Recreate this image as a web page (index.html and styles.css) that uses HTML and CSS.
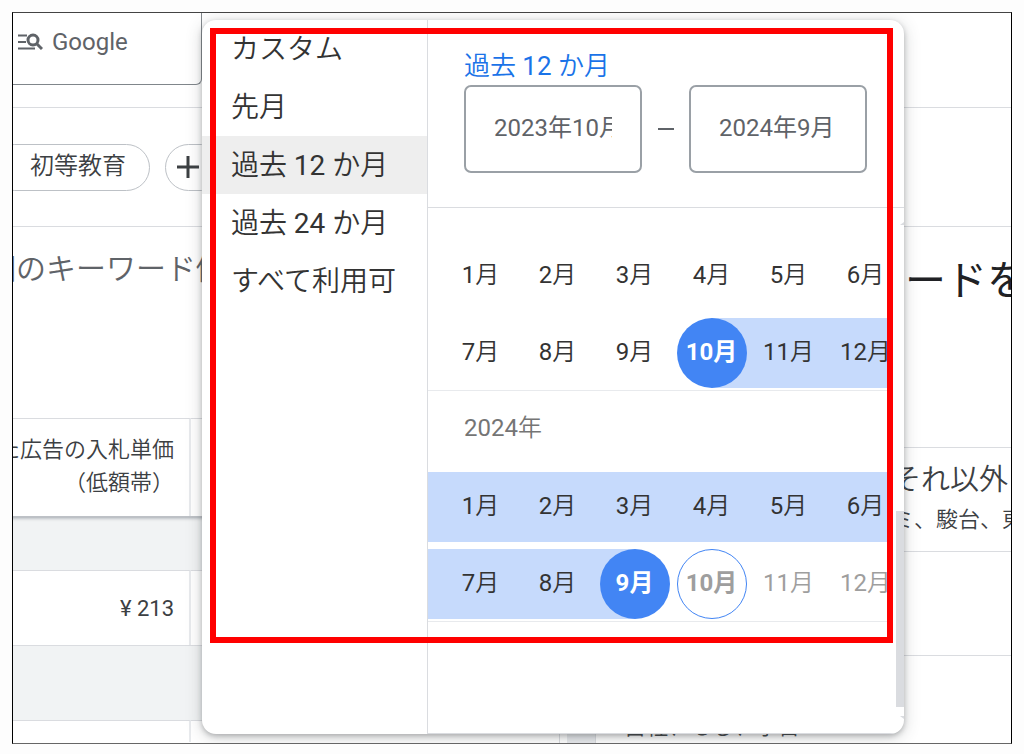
FILE: index.html
```html
<!DOCTYPE html>
<html lang="ja">
<head>
<meta charset="utf-8">
<meta name="viewport" content="width=device-width, initial-scale=1">
<title>Google</title>
<link rel="stylesheet" href="styles.css">
</head>
<body>
<div class="frame">
  <header class="topbar">
    <button class="network" type="button">
      <svg class="network-icon" viewBox="0 0 26 18" aria-hidden="true">
        <g fill="none" stroke="#5f6368">
          <path d="M1 2.500h9M1 9h8M1 15.500h17" stroke-width="2"/>
          <circle cx="16" cy="7" r="5" stroke-width="3"/>
          <path d="M19.500 10.500l5.500 5.500" stroke-width="3"/>
        </g>
      </svg>
      <span>Google</span>
    </button>
  </header>
  <div class="chips">
    <button class="chip" type="button">初等教育</button>
    <button class="chip chip-add" type="button" aria-label="追加">
      <svg viewBox="0 0 24 24" width="24" height="24" aria-hidden="true"><path d="M12 1v22M1 12h22" stroke="#3c4043" stroke-width="3" fill="none"/></svg>
    </button>
  </div>
  <main class="columns">
    <section class="ideas">
      <h2 class="ideas-title">個のキーワード候補</h2>
      <table class="bids">
        <thead>
          <tr><th class="price" scope="col">た広告の入札単価<br>（低額帯）</th><td></td></tr>
        </thead>
        <tbody>
          <tr class="band"><td colspan="2"></td></tr>
          <tr class="row"><td class="price">¥ 213</td><td></td></tr>
          <tr class="band band-tall"><td colspan="2"></td></tr>
          <tr class="row-last"><td class="price"></td><td></td></tr>
        </tbody>
      </table>
    </section>
    <div class="gutter"></div>
    <aside class="refine">
      <h2 class="refine-title">ードを</h2>
      <div class="refine-row refine-group">
        <div class="group-name">それ以外</div>
        <div class="group-items">ミ、駿台、東</div>
      </div>
      <div class="refine-row refine-empty"></div>
      <div class="refine-brands">自社、もし、予日</div>
    </aside>
  </main>

  <div class="picker" role="dialog" aria-label="期間">
    <div class="presets">
      <button class="preset" type="button">カスタム</button>
      <button class="preset" type="button">先月</button>
      <button class="preset preset-on" type="button">過去 <span class="num">12</span> か月</button>
      <button class="preset" type="button">過去 <span class="num">24</span> か月</button>
      <button class="preset" type="button">すべて利用可</button>
    </div>
    <div class="calendar">
      <div class="range">
        <div class="range-name">過去 <span class="num">12</span> か月</div>
        <div class="range-fields">
          <input class="field" type="text" aria-label="開始月" value="2023年10月">
          <span class="dash"></span>
          <input class="field" type="text" aria-label="終了月" value="2024年9月">
        </div>
      </div>
      <div class="scroll">
        <div class="years">
          <div class="year year-first">
            <div class="months">
              <div class="cell"><button class="month" type="button"><span class="num">1</span>月</button></div>
              <div class="cell"><button class="month" type="button"><span class="num">2</span>月</button></div>
              <div class="cell"><button class="month" type="button"><span class="num">3</span>月</button></div>
              <div class="cell"><button class="month" type="button"><span class="num">4</span>月</button></div>
              <div class="cell"><button class="month" type="button"><span class="num">5</span>月</button></div>
              <div class="cell"><button class="month" type="button"><span class="num">6</span>月</button></div>
              <div class="cell"><button class="month" type="button"><span class="num">7</span>月</button></div>
              <div class="cell"><button class="month" type="button"><span class="num">8</span>月</button></div>
              <div class="cell"><button class="month" type="button"><span class="num">9</span>月</button></div>
              <div class="cell in-start"><button class="month picked" type="button">10月</button></div>
              <div class="cell in"><button class="month" type="button"><span class="num">11</span>月</button></div>
              <div class="cell in"><button class="month" type="button"><span class="num">12</span>月</button></div>
            </div>
          </div>
          <div class="year">
            <div class="year-name"><span class="num">2024</span>年</div>
            <div class="months">
              <div class="cell in"><button class="month" type="button"><span class="num">1</span>月</button></div>
              <div class="cell in"><button class="month" type="button"><span class="num">2</span>月</button></div>
              <div class="cell in"><button class="month" type="button"><span class="num">3</span>月</button></div>
              <div class="cell in"><button class="month" type="button"><span class="num">4</span>月</button></div>
              <div class="cell in"><button class="month" type="button"><span class="num">5</span>月</button></div>
              <div class="cell in"><button class="month" type="button"><span class="num">6</span>月</button></div>
              <div class="cell in"><button class="month" type="button"><span class="num">7</span>月</button></div>
              <div class="cell in"><button class="month" type="button"><span class="num">8</span>月</button></div>
              <div class="cell in-end"><button class="month picked" type="button">9月</button></div>
              <div class="cell"><button class="month today" type="button" disabled>10月</button></div>
              <div class="cell"><button class="month" type="button" disabled><span class="num">11</span>月</button></div>
              <div class="cell"><button class="month" type="button" disabled><span class="num">12</span>月</button></div>
            </div>
          </div>
        </div>
        <div class="track">
          <svg class="arrow" viewBox="0 0 4 3" aria-hidden="true"><path d="M0 3L4 0v3z" fill="#dadce0"/></svg>
          <div class="thumb"></div>
          <svg class="arrow" viewBox="0 0 4 3" aria-hidden="true"><path d="M0 0h4v3z" fill="#dadce0"/></svg>
        </div>
      </div>
    </div>
  </div>
  <div class="highlight"></div>
</div>
</body>
</html>
```
FILE: styles.css
```css
* { box-sizing: border-box; }

body {
  margin: 0;
  padding: 12px 12px 10px;
  background: #fdfdfd;
  color: #3c4043;
  font-family: Roboto, "Noto Sans CJK JP", sans-serif;
  font-size: 22px;
}

button, input { font: inherit; color: inherit; }
button { border: 0; padding: 0; background: none; }
h2 { margin: 0; font-weight: 350; }
.num { font-weight: 400; }

.frame {
  position: relative;
  overflow: hidden;
  border: 1px solid #000;
  border-top-color: #444;
  border-bottom-color: #666;
  background: #fff;
}

.topbar {
  height: 95px;
  border-bottom: 1px solid #dadce0;
}

.network {
  display: flex;
  align-items: center;
  gap: 9px;
  width: 189px;
  height: 72px;
  padding: 0 0 14px 4px;
  border: solid #80868b;
  border-width: 0 1px 1px 0;
  border-radius: 0 0 6px 0;
  font-size: 24px;
  color: #5f6368;
}
.network-icon { width: 26px; height: 18px; }

.chips {
  display: flex;
  align-items: center;
  gap: 15px;
  height: 119px;
  margin-left: -22px;
  border-bottom: 1px solid #dadce0;
}
.chip {
  height: 47px;
  padding: 0 23px 7px 38px;
  border: 1px solid #bdc1c6;
  border-radius: 24px;
  font-size: 24px;
  font-weight: 350;
}
.chip-add { display: flex; align-items: center; padding: 0 24px 0 10px; }

.columns {
  display: grid;
  grid-template-columns: 547px 36px 1fr;
}

.ideas { border-right: 1px solid #dadce0; }
.ideas-title {
  height: 191px;
  margin-left: -27px;
  padding-top: 20px;
  font-size: 30px;
  line-height: 44px;
  color: #5f6368;
  white-space: nowrap;
}
.bids {
  width: 586px;
  margin-left: -40px;
  border-collapse: separate;
  border-spacing: 0;
  table-layout: fixed;
}
.bids th, .bids td { padding: 0; border-top: 1px solid #dadce0; }
.bids .price {
  width: 218px;
  padding-right: 15px;
  border-right: 2px solid #e8eaed;
  text-align: right;
  white-space: nowrap;
}
.bids th.price {
  height: 98px;
  padding-bottom: 4px;
  line-height: 33px;
  font-weight: 350;
}
.bids .band td {
  height: 54px;
  background: #f1f3f4;
  border-top: 2px solid #bdc1c6;
  box-shadow: inset 0 3px 3px -2px #bdc1c6;
}
.bids .band-tall td { height: 75px; border-top: 1px solid #dadce0; box-shadow: none; }
.bids .row td { height: 75px; }
.bids .row-last td { height: 22px; }

.gutter {
  margin: 0 0 0 7px;
  border-right: 1px solid #dadce0;
  background: #e8eaed;
}

.refine { overflow: hidden; white-space: nowrap; font-weight: 350; }
.refine-title {
  height: 221px;
  padding: 24px 0 0 309px;
  border-bottom: 1px solid #dadce0;
  font-size: 41px;
  font-weight: 400;
  line-height: 60px;
  color: #202124;
}
.refine-row { height: 104px; border-bottom: 1px solid #dadce0; }
.refine-group { padding: 12px 0 0 296px; }
.group-name { font-size: 29px; line-height: 40px; }
.group-items { line-height: 40px; }
.refine-brands { padding: 55px 0 0 28px; line-height: 32px; }

.picker {
  position: absolute;
  top: 7px;
  left: 189px;
  display: grid;
  grid-template-columns: 225px 477px;
  height: 714px;
  overflow: hidden;
  border-radius: 14px;
  background: #fff;
  box-shadow: 0 2px 5px rgba(60, 64, 67, .3), 0 3px 16px rgba(60, 64, 67, .25);
}
.highlight {
  position: absolute;
  top: 15px;
  left: 197px;
  width: 683px;
  height: 615px;
  border: 6px solid #f00;
  pointer-events: none;
}

.presets { display: flex; flex-direction: column; }
.preset {
  height: 58px;
  padding: 0 0 4px 29px;
  font-size: 28px;
  font-weight: 350;
  text-align: left;
  color: #333;
}
.preset-on { background: #eee; }

.calendar {
  display: flex;
  flex-direction: column;
  border-left: 1px solid #dadce0;
  border-bottom: 1px solid #dadce0;
}
.range {
  height: 188px;
  padding: 27px 37px 0 36px;
  border-bottom: 1px solid #dadce0;
}
.range-name {
  font-size: 26px;
  line-height: 38px;
  font-weight: 350;
  color: #1a73e8;
}
.range-fields { display: flex; align-items: center; justify-content: space-between; }
.field {
  width: 178px;
  height: 88px;
  padding: 0 28px 8px 28px;
  border: 2px solid #9aa0a6;
  border-radius: 7px;
  background: #fff;
  font-size: 24px;
  font-weight: 400;
  color: #5f6368;
}
.dash { width: 16px; height: 2px; background: #5f6368; }

.scroll { display: flex; flex: 1; justify-content: space-between; min-height: 0; }
.years { width: 462px; overflow: hidden; }
.year {
  width: 476px;
  padding-bottom: 2px;
  border-bottom: 1px solid #e8eaed;
}
.year-first { padding-top: 33px; }
.year-name {
  height: 81px;
  padding: 17px 0 0 36px;
  font-size: 24px;
  font-weight: 350;
  line-height: 40px;
  color: #757575;
}
.months {
  display: grid;
  grid-template-columns: 91px repeat(5, 77px);
  row-gap: 7px;
}
.cell { display: flex; justify-content: flex-end; padding-right: 3px; }
.in { background: #c6dafc; }
.in-start { background: linear-gradient(to right, transparent 50%, #c6dafc 50%); }
.in-end { background: linear-gradient(to right, #c6dafc 50%, transparent 50%); }
.month {
  width: 70px;
  height: 70px;
  padding: 0 1px 7px 0;
  border-radius: 50%;
  font-size: 24px;
  font-weight: 350;
  color: #333;
}
.month:disabled { color: #9e9e9e; }
.picked { background: #4285f4; color: #fff; font-weight: 700; }
.month.picked { color: #fff; }
.today { border: 1px solid #4285f4; font-weight: 700; }

.track {
  display: flex;
  flex-direction: column;
  align-items: flex-end;
  width: 8px;
  padding-top: 14px;
}
.arrow { width: 4px; height: 3px; }
.thumb {
  width: 8px;
  height: 196px;
  margin: 286px 0 9px;
  background: #dadce0;
}
```
